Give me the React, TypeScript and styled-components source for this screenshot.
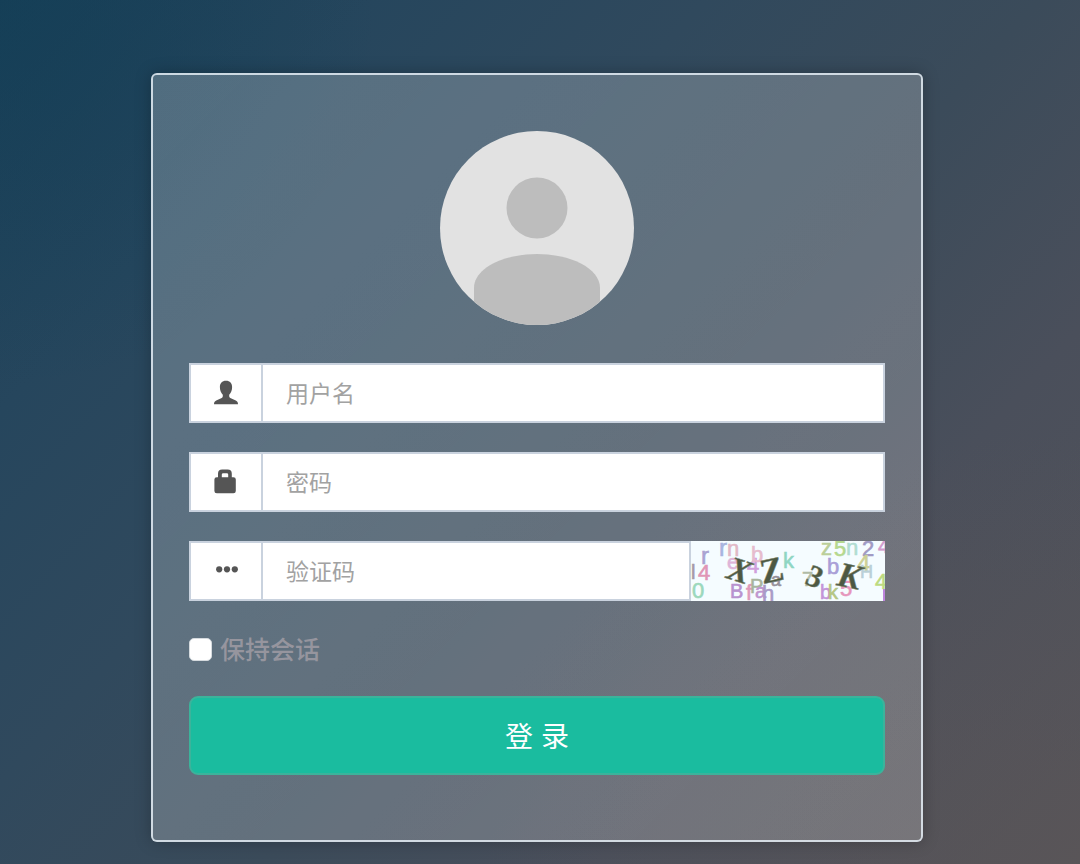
import React, { useId } from "react";
import styled, { createGlobalStyle } from "styled-components";

const GlobalStyle = createGlobalStyle`
  *, *::before, *::after { box-sizing: border-box; }
  html { min-height: 100%; background: #35495a; }
  body {
    margin: 0;
    font-family: "Liberation Sans", "Noto Sans CJK SC", sans-serif;
  }
`;

const Page = styled.div`
  min-height: 100vh;
  padding: 73px 24px 22px 18px;
  background:
    radial-gradient(ellipse 35% 45% at 0% 0%, rgba(16, 62, 86, 0.6), transparent),
    radial-gradient(ellipse 55% 50% at 100% 100%, rgba(94, 86, 86, 0.5), transparent),
    linear-gradient(132deg, #1c4058 0%, #26465d 20%, #30495d 38%, #3b4b5a 56%, #4a4f5b 74%, #54545a 100%);
`;

const Card = styled.form`
  max-width: 772px;
  margin: 0 auto;
  padding: 56px 36px 65px;
  display: flex;
  flex-direction: column;
  border: 2px solid rgba(235, 243, 250, 0.85);
  border-radius: 6px;
  background: linear-gradient(135deg, rgba(255, 255, 255, 0.23), rgba(255, 255, 255, 0.2));
  background-clip: padding-box;
  box-shadow: 0 0 16px rgba(0, 0, 0, 0.25);
`;

const Avatar = styled.svg`
  width: 194px;
  height: 194px;
  align-self: center;
  border-radius: 50%;
`;

const Fields = styled.div`
  margin-top: 38px;
  display: flex;
  flex-direction: column;
  gap: 29px;
`;

const Group = styled.div`
  display: flex;
  height: 60px;
`;

const Addon = styled.label`
  flex: none;
  width: 72px;
  display: flex;
  align-items: center;
  justify-content: center;
  border: 2px solid #c9d2de;
  border-right: 0;
  background: #fff;
  color: #555;
`;

const TextInput = styled.input`
  flex: 1;
  min-width: 0;
  padding: 0 24px 2px 23px;
  border: 2px solid #c9d2de;
  border-radius: 0;
  outline: 0;
  background: #fff;
  color: #555;
  font: 23px "Noto Sans CJK SC", sans-serif;
  &::placeholder { color: #a2a2a2; opacity: 1; }
`;

const CaptchaButton = styled.button`
  flex: none;
  width: 194px;
  padding: 0;
  border: 0;
  background: #f5fcff;
  cursor: pointer;
  svg { display: block; width: 100%; height: 60px; }
`;

const Remember = styled.label`
  margin-top: 30px;
  display: flex;
  align-items: center;
  align-self: flex-start;
  gap: 8px;
  height: 36px;
  color: #96959e;
  font-size: 25px;
  font-weight: 500;
  span { padding-bottom: 3px; }
`;

const Checkbox = styled.input`
  appearance: none;
  width: 23px;
  height: 23px;
  margin: 0;
  border: 1px solid #d5dade;
  border-radius: 5px;
  background: #fff;
  &:checked { background: #19bc9d; }
`;

const Submit = styled.button`
  height: 79px;
  margin-top: 29px;
  padding: 0 0 2px;
  border: 2px solid #3cb39b;
  border-radius: 9px;
  background: #1abc9f;
  color: #fff;
  font: 28px "Liberation Sans", "Noto Sans CJK SC", sans-serif;
  cursor: pointer;
`;

const UserIcon = () => (
  <svg width="24" height="26" viewBox="0 0 24 26" fill="currentColor" aria-hidden="true">
    <path d="M12 .8C8 .8 5.900 3.400 5.900 7.200c0 3.200 1.200 5.900 2.900 7.500v1.600c0 .8-.4 1.300-1.100 1.600L2.200 20.600C.6 21.400 0 22.400 0 24.200h24c0-1.800-.6-2.800-2.200-3.600l-5.500-2.700c-.7-.3-1.100-.8-1.100-1.600v-1.600c1.700-1.600 2.900-4.300 2.900-7.500C18.100 3.400 16 .8 12 .8z" />
  </svg>
);

const LockIcon = () => (
  <svg width="24" height="26" viewBox="0 0 24 26" fill="currentColor" aria-hidden="true">
    <path fillRule="evenodd" d="M4 8.200V4.800Q4 .6 8.200 .6h5.400q4.200 0 4.200 4.200v3.400h1.600Q21.800 8.200 21.800 10.600v11.300q0 2.300-2.400 2.300H2.800Q.4 24.200.4 21.900V10.600Q.4 8.200 2.800 8.200zM7.800 8.200h6.400V5.600q0-1.400-1.400-1.400H9.200Q7.800 4.200 7.800 5.600z" />
  </svg>
);

const DotsIcon = () => (
  <svg width="24" height="26" viewBox="0 0 24 26" fill="currentColor" aria-hidden="true">
    <circle cx="5.200" cy="11.300" r="3.100" />
    <circle cx="13" cy="11.300" r="3.100" />
    <circle cx="20.800" cy="11.300" r="3.100" />
  </svg>
);

type Glyph = [text: string, x: number, y: number, color: string, size: number];

const noise: Glyph[] = [
  ["r", 10, 23, "#a9a3d2", 24], ["r", 28, 15, "#a8b4df", 24], ["n", 36, 15, "#e2b8c6", 22],
  ["e", 36, 28, "#dfb4d8", 21], ["4", 56, 32, "#d0a0dc", 22], ["b", 60, 21, "#e6bccd", 22],
  ["l", 0, 38, "#a79aa5", 20], ["4", 7, 39, "#e096b6", 22], ["0", 1, 57, "#9bd8bc", 22],
  ["k", 92, 27, "#8fd6c3", 22], ["B", 39, 57, "#b893cf", 20], ["f", 55, 59, "#e09abb", 22],
  ["P", 59, 52, "#a8b59e", 20], ["a", 64, 57, "#c096cf", 20], ["h", 71, 60, "#a99bc7", 22],
  ["a", 80, 45, "#96919b", 18], ["z", 130, 14, "#bbcf9a", 22], ["5", 143, 15, "#b5d88f", 22],
  ["n", 155, 14, "#b0ddd2", 22], ["2", 171, 15, "#a09ac4", 22], ["4", 187, 12, "#d29bcc", 20],
  ["b", 136, 33, "#a99fd7", 22], ["4", 166, 31, "#cdd095", 24], ["H", 169, 37, "#b9d0d8", 18],
  ["7", 111, 45, "#b0bba6", 20], ["b", 129, 58, "#c495d8", 20], ["k", 137, 58, "#b6c784", 20],
  ["5", 149, 55, "#e695bc", 22], ["4", 184, 48, "#bddb80", 22],
];

const Captcha = () => (
  <svg viewBox="0 0 194 60" aria-hidden="true">
    <g fontFamily="Liberation Sans, sans-serif" strokeWidth="0.6">
      {noise.map(([text, x, y, color, size], i) => (
        <text key={i} x={x} y={y} fill={color} stroke={color} fontSize={size}>{text}</text>
      ))}
    </g>
    <g fontFamily="Liberation Serif, serif" fontWeight="700" fill="#4d5843" stroke="#7c866f" strokeWidth="0.5">
      <text x="37" y="41" fontSize="34" fontStyle="italic" transform="rotate(18 49 30)">X</text>
      <text x="69" y="41" fontSize="35" transform="rotate(-12 80 29)">Z</text>
      <text x="116" y="46" fontSize="31" transform="rotate(22 124 36)">3</text>
      <text x="147" y="47" fontSize="35" fontStyle="italic" transform="rotate(12 160 35)">K</text>
    </g>
    <path d="M193 48v12" stroke="#bd85dc" strokeWidth="2" />
  </svg>
);

interface FieldProps {
  icon: React.ReactNode;
  label: string;
  type?: string;
  children?: React.ReactNode;
}

const Field = ({ icon, label, type = "text", children }: FieldProps) => {
  const id = useId();
  return (
    <Group>
      <Addon htmlFor={id}>{icon}</Addon>
      <TextInput id={id} type={type} placeholder={label} aria-label={label} />
      {children}
    </Group>
  );
};

export default function App() {
  return (
    <>
      <GlobalStyle />
      <Page>
        <Card onSubmit={(event) => event.preventDefault()}>
          <Avatar viewBox="0 0 194 194" aria-hidden="true">
            <rect width="194" height="194" fill="#e2e2e2" />
            <circle cx="97" cy="77" r="30.500" fill="#bdbdbd" />
            <path d="M34 194V157C34 137 64 123 97 123S160 137 160 157V194Z" fill="#bdbdbd" />
          </Avatar>
          <Fields>
            <Field icon={<UserIcon />} label="用户名" />
            <Field icon={<LockIcon />} label="密码" type="password" />
            <Field icon={<DotsIcon />} label="验证码">
              <CaptchaButton type="button" aria-label="验证码">
                <Captcha />
              </CaptchaButton>
            </Field>
          </Fields>
          <Remember>
            <Checkbox type="checkbox" />
            <span>保持会话</span>
          </Remember>
          <Submit type="submit">登 录</Submit>
        </Card>
      </Page>
    </>
  );
}
